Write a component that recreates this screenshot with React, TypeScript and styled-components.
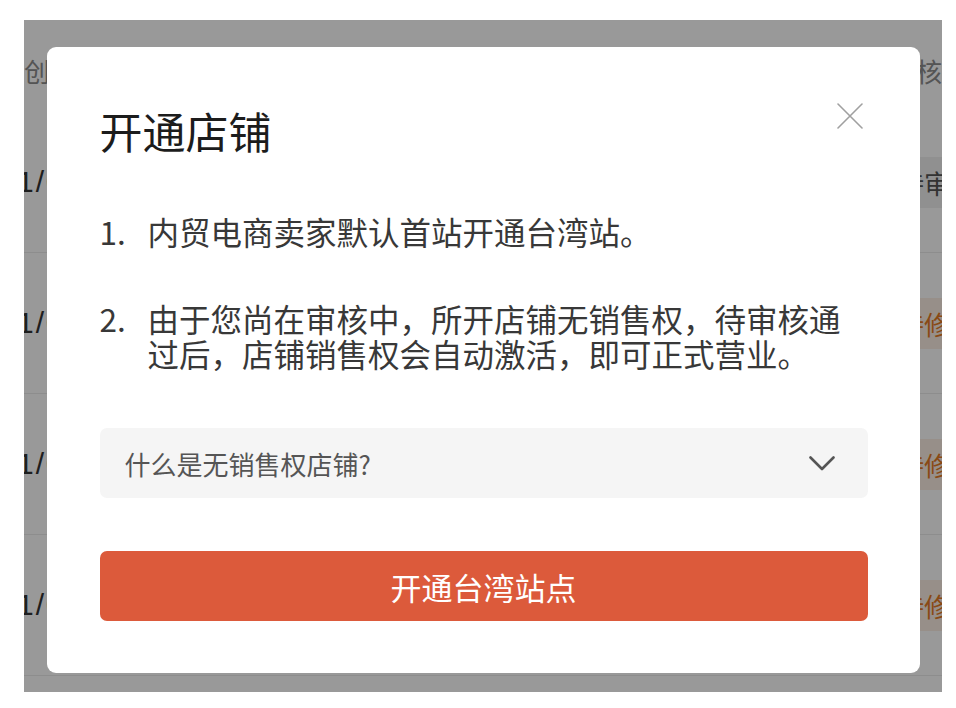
import React from "react";
import styled, { createGlobalStyle } from "styled-components";

const GlobalStyle = createGlobalStyle`
  html, body {
    margin: 0;
    padding: 0;
    background: #ffffff;
    font-family: "Noto Sans CJK SC", "Noto Sans", sans-serif;
  }
`;

const Screen = styled.div`
  position: relative;
  margin: 20px 0 0 24px;
  width: 918px;
  height: 672px;
  overflow: hidden;
  background: #ffffff;
`;

const Table = styled.div`
  display: flex;
  flex-direction: column;
`;

const HeaderRow = styled.div`
  display: grid;
  grid-template-columns: 862px auto;
  align-items: center;
  height: 92px;
  padding-top: 8px;
  box-sizing: border-box;
  font-size: 26px;
  color: #8c8c8c;
  white-space: nowrap;
`;

const HeaderCell = styled.span<{ $gap?: number }>`
  letter-spacing: ${(p) => p.$gap ?? 0}px;
`;

const Row = styled.div`
  display: grid;
  grid-template-columns: 862px auto;
  align-items: center;
  height: 140px;
  border-bottom: 1px solid #ececec;
  white-space: nowrap;
`;

const DateText = styled.span`
  margin-left: -63px;
  font-family: "Liberation Sans", Arial, sans-serif;
  font-size: 30px;
  letter-spacing: 2px;
  color: #333333;
`;

const Tag = styled.span<{ $tone: "gray" | "orange" }>`
  display: inline-flex;
  align-items: center;
  height: 51px;
  padding: 0 12px;
  font-size: 26px;
  border-radius: 4px;
  background: ${(p) => (p.$tone === "gray" ? "#f0f0f0" : "#fcefe4")};
  color: ${(p) => (p.$tone === "gray" ? "#555555" : "#e47b26")};
`;

const Overlay = styled.div`
  position: absolute;
  inset: 0;
  background: rgba(0, 0, 0, 0.4);
  display: flex;
  justify-content: center;
  align-items: flex-start;
  padding-top: 27px;
`;

const Modal = styled.div`
  position: relative;
  width: 873px;
  box-sizing: border-box;
  padding: 53px 52px 52px 53px;
  background: #ffffff;
  border-radius: 9px;
  display: flex;
  flex-direction: column;
`;

const CloseButton = styled.button`
  position: absolute;
  top: 56px;
  right: 57px;
  width: 26px;
  height: 26px;
  padding: 0;
  border: none;
  background: transparent;
  display: flex;
  cursor: pointer;
`;

const Title = styled.h2`
  margin: 0;
  font-size: 43px;
  line-height: 60px;
  font-weight: 400;
  color: #1c1c1c;
`;

const List = styled.ol`
  list-style: none;
  margin: 54px 0 0;
  padding: 0;
  display: flex;
  flex-direction: column;
  gap: 52px;
`;

const Item = styled.li`
  display: grid;
  grid-template-columns: 48px 1fr;
  font-size: 31.5px;
  line-height: 35px;
  color: #383838;
`;

const Marker = styled.span`
  white-space: nowrap;
`;

const Collapse = styled.div`
  margin-top: 57px;
  height: 70px;
  box-sizing: border-box;
  padding: 0 33px 0 25px;
  background: #f5f5f5;
  border-radius: 7px;
  display: flex;
  align-items: center;
  justify-content: space-between;
  font-size: 26px;
  color: #555555;
`;

const PrimaryButton = styled.button`
  margin-top: 53px;
  height: 70px;
  border: none;
  border-radius: 7px;
  background: #dc5a3b;
  color: #ffffff;
  font-family: "Noto Sans CJK SC", "Noto Sans", sans-serif;
  font-size: 31px;
  cursor: pointer;
`;

const rows: { date: string; tag: string; tone: "gray" | "orange" }[] = [
  { date: "2021/01/12 10:30", tag: "待审核", tone: "gray" },
  { date: "2021/01/08 16:22", tag: "待修改", tone: "orange" },
  { date: "2021/01/05 09:14", tag: "待修改", tone: "orange" },
  { date: "2021/01/03 14:47", tag: "待修改", tone: "orange" },
];

export default function App() {
  return (
    <>
      <GlobalStyle />
      <Screen>
        <Table>
          <HeaderRow>
            <HeaderCell>创建时间</HeaderCell>
            <HeaderCell $gap={4}>审核状态</HeaderCell>
          </HeaderRow>
          {rows.map((r, i) => (
            <Row key={i}>
              <DateText>{r.date}</DateText>
              <div>
                <Tag $tone={r.tone}>{r.tag}</Tag>
              </div>
            </Row>
          ))}
        </Table>
        <Overlay>
          <Modal>
            <CloseButton aria-label="关闭">
              <svg width="26" height="26" viewBox="0 0 26 26">
                <path
                  d="M1 1 L25 25 M25 1 L1 25"
                  stroke="#a0a0a0"
                  strokeWidth="1.6"
                  fill="none"
                  strokeLinecap="round"
                />
              </svg>
            </CloseButton>
            <Title>开通店铺</Title>
            <List>
              <Item>
                <Marker>1.</Marker>
                <span>内贸电商卖家默认首站开通台湾站。</span>
              </Item>
              <Item>
                <Marker>2.</Marker>
                <span>
                  由于您尚在审核中，所开店铺无销售权，待审核通过后，店铺销售权会自动激活，即可正式营业。
                </span>
              </Item>
            </List>
            <Collapse>
              <span>什么是无销售权店铺?</span>
              <svg width="26" height="15" viewBox="0 0 26 15">
                <path
                  d="M1.5 1.5 L13 13 L24.5 1.5"
                  stroke="#555555"
                  strokeWidth="2.6"
                  fill="none"
                  strokeLinecap="round"
                  strokeLinejoin="round"
                />
              </svg>
            </Collapse>
            <PrimaryButton>开通台湾站点</PrimaryButton>
          </Modal>
        </Overlay>
      </Screen>
    </>
  );
}
